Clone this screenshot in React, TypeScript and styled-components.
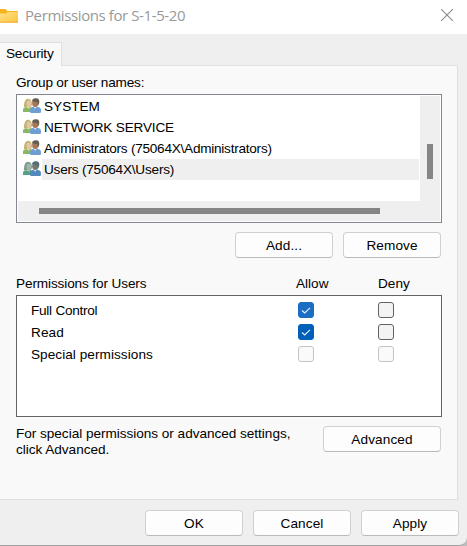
import React from "react";
import styled, { createGlobalStyle } from "styled-components";

const Global = createGlobalStyle`
  * { box-sizing: border-box; }
  body { margin: 0; background: #bdbdbd; overflow: hidden; }
`;

const Window = styled.div`
  width: 467px;
  height: 546px;
  display: flex;
  flex-direction: column;
  background: #efefef;
  border-bottom: 1px solid #a4a4a4;
  border-bottom-right-radius: 8px;
  overflow: hidden;
  color: #000;
  font: 13.6px/16px "Liberation Sans", Arial, sans-serif;
  white-space: nowrap;
`;

const TitleBar = styled.header`
  height: 34px;
  flex: none;
  display: flex;
  align-items: center;
  background: #fff;
  padding-right: 14px;
`;

const Title = styled.h1`
  margin: -4px auto 0 6px;
  font: 400 15px/20px "Open Sans", "Noto Sans", sans-serif;
  letter-spacing: -0.4px;
  color: #999;
`;

const Close = styled.button`
  width: 12px;
  height: 12px;
  margin-top: -4px;
  padding: 0;
  border: 0;
  background: none;
  svg { display: block; }
`;

const Tab = styled.div`
  width: 62px;
  height: 24px;
  margin: 8px 0 -1px;
  flex: none;
  z-index: 1;
  padding: 3px 0 0 6px;
  background: #f9f9f9;
  border: 1px solid #dfdfdf;
  border-width: 1px 1px 0 0;
  letter-spacing: -0.2px;
`;

const Panel = styled.main`
  width: 458px;
  height: 435px;
  flex: none;
  display: flex;
  flex-direction: column;
  padding: 9px 15px 0 16px;
  background: #f9f9f9;
  border: 1px solid #dfdfdf;
  border-left: 0;
`;

const Label = styled.div<{ $spacing?: number; $shift?: number }>`
  letter-spacing: ${(p) => p.$spacing ?? 0}px;
  margin-left: ${(p) => p.$shift ?? 0}px;
`;

const NameList = styled.div`
  width: 426px;
  height: 129px;
  margin-top: 3px;
  padding: 1px;
  flex: none;
  border: 1px solid #828790;
  background: #fff;
  display: grid;
  grid-template: 105px 20px / 402px 20px;
`;

const Names = styled.div`
  padding-left: 5px;
`;

const NameRow = styled.div`
  height: 21px;
  display: flex;
  align-items: center;
  svg { flex: none; margin-top: -2px; }
`;

const NameText = styled.span<{ $selected?: boolean; $spacing: number }>`
  width: 377px;
  height: 21px;
  margin-left: 1px;
  padding-left: 2px;
  line-height: 21px;
  background: ${(p) => (p.$selected ? "#efefef" : "transparent")};
  letter-spacing: ${(p) => p.$spacing}px;
`;

const VTrack = styled.div`
  background: #efefef;
  padding: 48px 7px 0;
`;

const HTrack = styled.div`
  grid-column: 1 / 3;
  background: #efefef;
  padding: 7px 0 0 21px;
`;

const Thumb = styled.div<{ $w: number; $h: number }>`
  width: ${(p) => p.$w}px;
  height: ${(p) => p.$h}px;
  background: #858585;
`;

const Button = styled.button<{ $wide?: boolean }>`
  width: ${(p) => (p.$wide ? 118 : 98)}px;
  height: 26px;
  flex: none;
  padding: 1px 0 0;
  border: 1px solid #d0d0d0;
  border-bottom-color: #bababa;
  border-radius: 4px;
  background: #fdfdfd;
  color: #000;
  font: inherit;
  letter-spacing: 0.1px;
`;

const ListActions = styled.div`
  display: flex;
  justify-content: flex-end;
  gap: 10px;
  margin: 9px 1px 18px 0;
`;

const PermGrid = styled.div`
  display: grid;
  grid-template-columns: 1fr 80px 64px;
`;

const PermBox = styled.div`
  width: 426px;
  height: 122px;
  flex: none;
  margin-top: 3px;
  padding: 3px 0 0 14px;
  background: #fff;
  border: 1px solid #646464;
`;

const PermRow = styled.div`
  display: grid;
  grid-template-columns: 267px 80px 16px;
  height: 22px;
  align-items: center;
`;

const PermName = styled(Label)`
  padding-top: 2px;
`;

const Check = styled.span<{ $state: "soft" | "on" | "off" | "disabled" }>`
  width: 16px;
  height: 16px;
  display: block;
  border-radius: 3px;
  border: 1px solid
    ${(p) => ({ soft: "#1a6fc4", on: "#005fb8", off: "#626262", disabled: "#c5c5c5" })[p.$state]};
  background: ${(p) =>
    ({ soft: "#1a6fc4", on: "#005fb8", off: "#f3f3f3", disabled: "#fafafa" })[p.$state]};
  svg { display: block; }
`;

const Advice = styled.div`
  display: flex;
  justify-content: space-between;
  align-items: flex-start;
  margin: 9px 1px 0 0;
`;

const Footer = styled.footer`
  display: flex;
  justify-content: flex-end;
  gap: 10px;
  padding: 10px 8px 0 0;
`;

function Folder() {
  return (
    <svg width="19" height="16" viewBox="0 0 19 16">
      <defs>
        <linearGradient id="fold" x1="0" y1="0" x2="1" y2="1">
          <stop offset="0" stopColor="#ffe08a" />
          <stop offset="1" stopColor="#fbc53b" />
        </linearGradient>
      </defs>
      <path d="M0 0h5.500l2 2h9.700q.8 0 .8.800V7H0z" fill="#f5b51d" />
      <path d="M0 4.500h6L8 3h10v10.500H0z" fill="url(#fold)" />
      <path d="M0 13.200h18" stroke="#edae2d" />
    </svg>
  );
}

function People({ teal = false }: { teal?: boolean }) {
  const hair = teal ? "#7d9a90" : "#c2b274";
  const face = teal ? "#a4b7ac" : "#e2c7a4";
  return (
    <svg width="18" height="16" viewBox="0 0 18 16">
      <path d="M0 14v-2Q0 9.500 3 9l2 1 3-1q2 1 2 5z" fill={teal ? "#4fa283" : "#86b763"} />
      <path d="M.8 9Q1 1 5 .8q4 0 4 6L7.500 9.500 3 9z" fill={hair} />
      <ellipse cx="5.800" cy="5.500" rx="2.300" ry="3" fill={face} />
      <path d="M4 8h3.500L6 11.500z" fill={face} />
      <path d="M7 14.300V13q0-3.500 3.500-4.300h4q3.500.6 3.500 3.800v1.800l-1 .7H8z" fill={teal ? "#5289bd" : "#6e9ed4"} />
      <path d="M10.500 8.500h3.500L12 11z" fill="#d4e2ee" />
      <ellipse cx="12.300" cy="5" rx="3.200" ry="4" fill={teal ? "#747a72" : "#a47854"} />
      <path d="M9 3.500Q9.500 0 13 .3q4 .2 3.200 4.700l-1.200 2.500-.7-3.700q-2.800.4-4.300-.8z" fill={teal ? "#536d76" : "#665b50"} />
    </svg>
  );
}

function Tick() {
  return (
    <svg width="14" height="14" viewBox="0 0 14 14" fill="none">
      <path d="M3 7.500l2.700 2.500 5.300-5.200" stroke="#e8f2fc" strokeWidth="1.100" />
    </svg>
  );
}

const names = [
  { text: "SYSTEM", spacing: 0 },
  { text: "NETWORK SERVICE", spacing: -0.18 },
  { text: "Administrators (75064X\\Administrators)", spacing: -0.25 },
  { text: "Users (75064X\\Users)", spacing: -0.22, selected: true },
];

const permissions = [
  { text: "Full Control", spacing: -0.26, allow: "soft", deny: "off" },
  { text: "Read", spacing: 0.1, allow: "on", deny: "off" },
  { text: "Special permissions", spacing: 0.05, allow: "disabled", deny: "disabled" },
] as const;

export default function App() {
  return (
    <>
      <Global />
      <Window>
        <TitleBar>
          <Folder />
          <Title>Permissions for S-1-5-20</Title>
          <Close aria-label="Close">
            <svg width="12" height="12" viewBox="0 0 12 12">
              <path d="M0 0l12 12M12 0L0 12" stroke="#8c8c8c" strokeWidth="1.100" />
            </svg>
          </Close>
        </TitleBar>
        <Tab>Security</Tab>
        <Panel>
          <Label $spacing={-0.2}>Group or user names:</Label>
          <NameList>
            <Names>
              {names.map((n) => (
                <NameRow key={n.text}>
                  <People teal={n.selected} />
                  <NameText $selected={n.selected} $spacing={n.spacing}>{n.text}</NameText>
                </NameRow>
              ))}
            </Names>
            <VTrack><Thumb $w={6} $h={35} /></VTrack>
            <HTrack><Thumb $w={341} $h={6} /></HTrack>
          </NameList>
          <ListActions>
            <Button>Add...</Button>
            <Button>Remove</Button>
          </ListActions>
          <PermGrid>
            <Label $spacing={-0.12}>Permissions for Users</Label>
            <Label $shift={-2}>Allow</Label>
            <Label>Deny</Label>
          </PermGrid>
          <PermBox>
            {permissions.map((p) => (
              <PermRow key={p.text}>
                <PermName $spacing={p.spacing}>{p.text}</PermName>
                <Check $state={p.allow}>{p.allow !== "disabled" && <Tick />}</Check>
                <Check $state={p.deny} />
              </PermRow>
            ))}
          </PermBox>
          <Advice>
            <Label $spacing={-0.03}>
              For special permissions or advanced settings,
              <br />
              click Advanced.
            </Label>
            <Button $wide>Advanced</Button>
          </Advice>
        </Panel>
        <Footer>
          <Button>OK</Button>
          <Button>Cancel</Button>
          <Button>Apply</Button>
        </Footer>
      </Window>
    </>
  );
}
